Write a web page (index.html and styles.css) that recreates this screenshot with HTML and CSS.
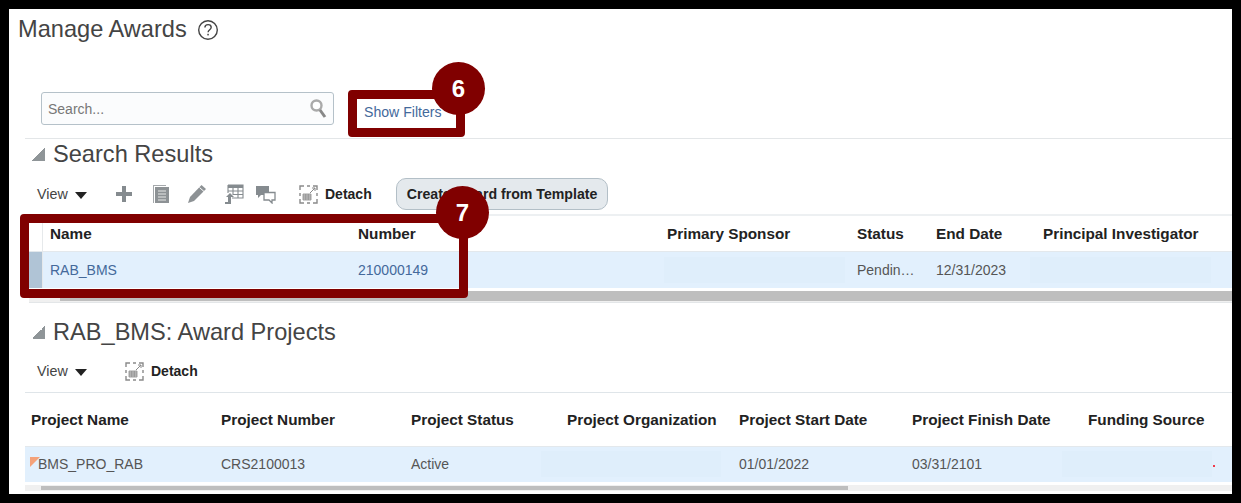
FILE: index.html
```html
<!DOCTYPE html>
<html lang="en">
<head>
    <meta charset="UTF-8">
    <title>Manage Awards</title>
    <link rel="stylesheet" href="styles.css">
</head>
<body>
    <div class="frame">
        <div class="page-title">
            <h1>Manage Awards</h1>
            <svg class="help-icon" width="22" height="22" viewBox="0 0 22 22">
                <circle cx="11" cy="11" r="9.3" fill="none" stroke="#444" stroke-width="1.4"/>
                <path d="M7.9 8.6c0-1.9 1.4-3 3.2-3s3.1 1.1 3.1 2.7c0 2.400-3.100 2.400-3.100 5" fill="none" stroke="#444" stroke-width="1.4"/>
                <rect x="10.300" y="14.800" width="1.500" height="1.600" fill="#444"/>
            </svg>
        </div>

        <div class="search-row">
            <div class="search-box">
                <span>Search...</span>
                <svg width="18" height="22" viewBox="0 0 18 22">
                    <circle cx="7.500" cy="7.500" r="5" fill="#fff" stroke="#aaa" stroke-width="2.400"/>
                    <path d="M11 12l5 7" stroke="#888" stroke-width="3"/>
                </svg>
            </div>
            <a class="link show-filters">Show Filters</a>
        </div>

        <section class="results">
            <div class="section-head">
                <span class="collapse"></span>
                <h2>Search Results</h2>
            </div>
            <div class="toolbar">
                <span class="view">View <i class="caret"></i></span>
                <div class="tool-icons">
                    <svg width="18" height="18" viewBox="0 0 18 18"><path d="M7 1h4v6h6v4h-6v6H7v-6H1V7h6z" fill="#858b8f"/></svg>
                    <svg class="tool-doc" width="18" height="20" viewBox="0 0 18 20"><path d="M1 1h13v1H2v17H1z" fill="#a5a9ac"/><rect x="3" y="3" width="14" height="16" fill="#8d9295"/><path d="M6 7h8M6 10h8M6 13h8M6 16h8" stroke="#e8e8e8" stroke-width="1.200"/></svg>
                    <svg width="20" height="20" viewBox="0 0 20 20"><path d="M14.500 1l4.500 4-12 12-6 2 2-6z" fill="#8d9295"/><path d="M12.500 3.500l4.500 4" stroke="#fff" stroke-width="1"/></svg>
                    <svg width="20" height="20" viewBox="0 0 20 20"><path d="M4 1h15v13H4z" fill="#fff"/><path d="M4 1h15v3H4z" fill="#858b8f"/><path d="M4 1h15v13H8M4 1v8M4 7h15M8.500 10.500H19M9 1v10M14 1v13" fill="none" stroke="#858b8f" stroke-width="1.100"/><path d="M1 20v-2h3v-5H2l4-4 4 4H7v7z" fill="#858b8f"/></svg>
                    <svg class="tool-chat" width="21" height="19" viewBox="0 0 21 19"><path d="M1 1h13v9H6l-3 3v-3H1z" fill="#858b8f"/><path d="M9 7.500h11v7.500h-3v3l-3-3H9z" fill="#fff" stroke="#858b8f" stroke-width="1.300"/></svg>
                </div>
                <span class="detach">
                    <svg width="19" height="19" viewBox="0 0 19 19"><use href="#detach-icon"/></svg>
                    Detach
                </span>
                <button class="template-btn">Create Award from Template</button>
            </div>

            <div class="award-table">
                <div class="table-row award-cols header-row">
                    <span class="row-head"></span>
                    <span>Name</span>
                    <span>Number</span>
                    <span>Primary Sponsor</span>
                    <span>Status</span>
                    <span>End Date</span>
                    <span>Principal Investigator</span>
                </div>
                <div class="table-row award-cols data-row">
                    <span class="row-head selected"></span>
                    <span class="link">RAB_BMS</span>
                    <span class="link">210000149</span>
                    <span><i class="redacted"></i></span>
                    <span>Pendin…</span>
                    <span>12/31/2023</span>
                    <span class="pi-cell"><i class="redacted"></i></span>
                </div>
            </div>
            <div class="scroll-track award-scroll"><div class="scroll-thumb"></div></div>
        </section>

        <section class="projects">
            <div class="section-head">
                <span class="collapse"></span>
                <h2>RAB_BMS: Award Projects</h2>
            </div>
            <div class="toolbar toolbar-small">
                <span class="view">View <i class="caret"></i></span>
                <span class="detach">
                    <svg width="19" height="19" viewBox="0 0 19 19">
                        <g id="detach-icon">
                            <path d="M1 5V1h4M8 1h3M14 1h4v4M18 8v3M18 14v4h-4M11 18H8M5 18H1v-4M1 11V8" fill="none" stroke="#8a8a8a" stroke-width="1.400"/>
                            <path d="M4 9h8v6H4z" fill="#c9c9c9" stroke="#8a8a8a" stroke-width=".8"/>
                            <path d="M4 11h8M4 13h8M6.700 9v6M9.300 9v6" stroke="#8a8a8a" stroke-width=".7"/>
                            <path d="M11 8l5-5M13 3h3v3" fill="none" stroke="#8a8a8a" stroke-width="1"/>
                        </g>
                    </svg>
                    Detach
                </span>
            </div>

            <div class="project-table">
                <div class="table-row project-cols project-header">
                    <span>Project Name</span>
                    <span>Project Number</span>
                    <span>Project Status</span>
                    <span>Project Organization</span>
                    <span>Project Start Date</span>
                    <span>Project Finish Date</span>
                    <span>Funding Source</span>
                </div>
                <div class="table-row project-cols data-row project-row">
                    <span class="name-cell">BMS_PRO_RAB</span>
                    <span>CRS2100013</span>
                    <span>Active</span>
                    <span class="org-cell"><i class="redacted"></i></span>
                    <span>01/01/2022</span>
                    <span>03/31/2101</span>
                    <span class="funding-cell"><i class="redacted"></i><i class="red-dot"></i></span>
                </div>
            </div>
            <div class="scroll-track project-scroll"><div class="scroll-thumb"></div></div>
        </section>

        <!-- Callouts drawn over the screenshot -->
        <div class="callout-box box-six"></div>
        <div class="callout-num num-six">6</div>
        <div class="callout-box box-seven"></div>
        <div class="callout-num num-seven">7</div>
    </div>
</body>
</html>
```

FILE: styles.css
```css
* {
    box-sizing: border-box;
}

html, body {
    height: 100%;
}

body {
    margin: 0;
    padding: 9px;
    background: #000;
    font-family: 'Liberation Sans', Arial, sans-serif;
    color: #555;
    overflow: hidden;
}

.frame {
    position: relative;
    height: 485px;
    background: #fff;
    overflow: hidden;
}

.page-title {
    display: flex;
    align-items: center;
    gap: 10px;
    height: 41px;
    padding-left: 9px;
}

h1, h2 {
    margin: 0;
    font-weight: 400;
    font-size: 23.600px;
    color: #444;
}

.search-row {
    display: flex;
    align-items: flex-start;
    margin: 0 0 0 16px;
    padding: 42px 0 0 16px;
    height: 89px;
    border-bottom: 1px solid #e3e6e8;
}

.search-box {
    display: flex;
    align-items: center;
    justify-content: space-between;
    width: 293px;
    height: 33px;
    padding: 0 6px 0 6px;
    background: #fbfcfd;
    border: 1px solid #b5c1c9;
    border-radius: 3px;
    font-size: 14px;
    color: #777;
}

.link {
    color: #44699b;
}

.show-filters {
    margin: 12px 0 0 30px;
    font-size: 14.100px;
}

.section-head {
    display: flex;
    align-items: center;
    height: 30px;
    padding-left: 23px;
    gap: 8px;
}

.collapse {
    width: 13px;
    height: 13px;
    background: linear-gradient(135deg, transparent 50%, #8f9598 50%);
}

.toolbar {
    display: flex;
    align-items: center;
    height: 45px;
    padding: 5px 0 0 28px;
    font-size: 14px;
}

.view {
    display: flex;
    align-items: center;
    gap: 7px;
    width: 78px;
    font-size: 14.300px;
    color: #444;
}

.caret {
    width: 0;
    height: 0;
    margin-top: 2px;
    border-left: 6px solid transparent;
    border-right: 6px solid transparent;
    border-top: 7px solid #222;
}

.tool-icons {
    display: flex;
    align-items: center;
    gap: 17px;
    width: 184px;
}

.tool-doc {
    margin-left: 2px;
}

.tool-chat {
    margin-left: -6px;
}

.detach {
    display: flex;
    align-items: center;
    gap: 7px;
    font-weight: 700;
    color: #222;
}

.template-btn {
    height: 32px;
    margin-left: 24px;
    padding: 0 10px;
    background: #e4e9ed;
    border: 1px solid #b3bfc7;
    border-radius: 10px;
    font-family: inherit;
    font-size: 14.150px;
    font-weight: 700;
    color: #222;
}

.table-row {
    display: grid;
    align-items: center;
    font-size: 14px;
}

.award-table {
    margin-left: 20px;
    border-top: 2px solid #edf0f2;
}

.award-cols {
    grid-template-columns: 14px 308px 309px 190px 79px 107px 1fr;
}

.award-cols > span:not(.row-head) {
    padding-left: 7px;
}

.header-row {
    height: 36px;
    border-bottom: 1px solid #e3e8ec;
    font-size: 15.300px;
    font-weight: 700;
    color: #222;
}

.row-head {
    align-self: stretch;
    border-right: 1px solid #e6e9eb;
}

.row-head.selected {
    background: #b0c4d6;
}

.data-row {
    height: 36px;
    background: #e2f0fd;
}

.redacted {
    display: block;
    height: 26px;
    background: #dfeefb;
}

.award-cols .redacted {
    width: 181px;
    margin-left: -3px;
}

.award-cols .pi-cell .redacted {
    margin-left: -13px;
}

.scroll-track {
    position: relative;
    background: #f0f0f0;
}

.award-scroll {
    height: 12px;
    margin: 3px 0 0 20px;
    border-bottom: 1px solid #e3e6e8;
}

.award-scroll .scroll-thumb {
    position: absolute;
    left: 31px;
    right: 0;
    top: 0;
    bottom: 1px;
    background: #bebebe;
}

.results {
    height: 165px;
}

.projects {
    margin-top: 13px;
}

.toolbar-small {
    padding-top: 3px;
}

.toolbar-small .view {
    width: 88px;
}

.project-table {
    margin-left: 16px;
    border-top: 1px solid #dfe5e9;
}

.project-cols {
    grid-template-columns: 190px 190px 156px 172px 173px 176px 1fr;
}

.project-cols > span {
    padding-left: 6px;
}

.project-header {
    height: 54px;
    border-bottom: 1px solid #e3e8ec;
    font-size: 15.300px;
    font-weight: 700;
    color: #222;
}

.project-row {
    height: 35px;
    padding-bottom: 2px;
}

.name-cell {
    position: relative;
    padding-left: 13px !important;
}

.name-cell::before {
    content: "";
    position: absolute;
    left: 5px;
    top: 1px;
    border-top: 10px solid #f4a27a;
    border-right: 10px solid transparent;
}

.org-cell .redacted {
    width: 180px;
    margin-left: -26px;
}

.funding-cell {
    position: relative;
}

.funding-cell .redacted {
    width: 150px;
    margin-left: -26px;
}

.red-dot {
    position: absolute;
    left: 131px;
    top: 14px;
    width: 2px;
    height: 2px;
    background: #f03a4a;
}

.project-scroll {
    height: 6px;
    margin: 3px 0 0 16px;
}

.project-scroll .scroll-thumb {
    position: absolute;
    left: 16px;
    top: 1px;
    width: 807px;
    height: 4px;
    background: #bebebe;
}

.callout-box {
    position: absolute;
    border: 9px solid #800000;
    border-radius: 4px;
}

.box-six {
    left: 339px;
    top: 81px;
    width: 117px;
    height: 47px;
}

.box-seven {
    left: 11px;
    top: 205px;
    width: 448px;
    height: 84px;
}

.callout-num {
    position: absolute;
    display: flex;
    align-items: center;
    justify-content: center;
    width: 53px;
    height: 53px;
    background: #800000;
    border-radius: 50%;
    font-size: 24px;
    font-weight: 700;
    color: #fff;
}

.num-six {
    left: 423px;
    top: 53px;
}

.num-seven {
    left: 427px;
    top: 177px;
}
```
